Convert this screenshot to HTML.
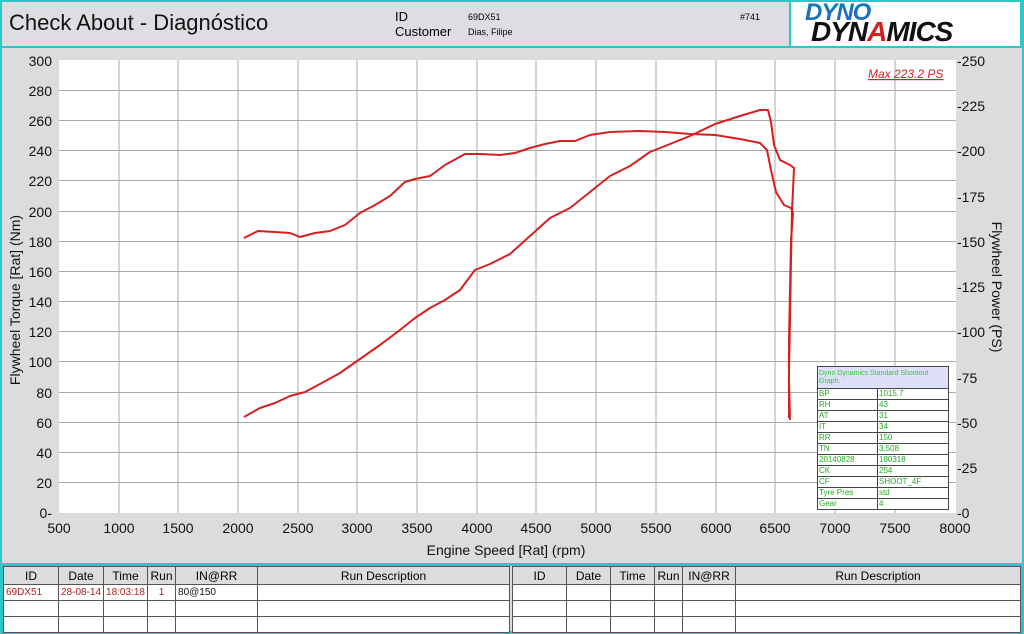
<!DOCTYPE html><html><head><meta charset="utf-8"><style>
body{margin:0;width:1024px;height:634px;overflow:hidden;background:#dcdcdf;font-family:"Liberation Sans",sans-serif;position:relative}
.a{position:absolute}
table{border-collapse:collapse;font-size:11px;position:absolute;background:#fff}
td{border:1px solid #555;height:15px;padding:0 2px;white-space:nowrap}
th{border:1px solid #555;height:15px;font-weight:normal;background:#dcdcdf;font-size:12px}
.inf{table-layout:fixed;width:131px;font-size:8px;color:#2a2;background:#fff}
.inf td{height:10px;line-height:10px;padding:0 1px;overflow:hidden;border-color:#444}
</style></head><body>
<div class="a" style="left:0;top:0;width:1024px;height:48px;border:2px solid #2cc7c7;box-sizing:border-box;background:#dedee2"></div>
<div class="a" style="left:9px;top:10px;font-size:22px;color:#111">Check About - Diagnóstico</div>
<div class="a" style="left:395px;top:9px;font-size:13px">ID</div>
<div class="a" style="left:395px;top:24px;font-size:13px">Customer</div>
<div class="a" style="left:468px;top:12px;font-size:9px">69DX51</div>
<div class="a" style="left:468px;top:27px;font-size:9px">Dias, Filipe</div>
<div class="a" style="left:740px;top:12px;font-size:9px">#741</div>
<div class="a" style="left:789px;top:0;width:233px;height:48px;background:#fff;border:2px solid #2cc7c7;box-sizing:border-box;overflow:hidden">
<div class="a" style="left:14px;top:-3px;font:italic bold 24px 'Liberation Sans',sans-serif;color:#1f6fc0;letter-spacing:-1px">DYNO</div>
<div class="a" style="left:20px;top:14px;font:italic bold 28px 'Liberation Sans',sans-serif;color:#111;letter-spacing:-1px">DYN<span style="color:#d02020">A</span>MICS</div>
</div>
<div class="a" style="left:0;top:48px;width:2px;height:516px;background:#2cc7c7"></div>
<div class="a" style="right:0;top:48px;width:2px;height:516px;background:#2cc7c7"></div>
<svg class="a" style="left:0;top:48px" width="1024" height="516" viewBox="0 48 1024 516" font-family="Liberation Sans" font-size="14">
<rect x="59" y="60" width="897" height="453" fill="#fff"/>
<g stroke="#aaa" stroke-width="1">
<path d="M119 60V513M178 60V513M238 60V513M298 60V513M357 60V513M417 60V513M477 60V513M536 60V513M596 60V513M656 60V513M716 60V513M775 60V513M835 60V513M895 60V513"/>
<path d="M59 90.5H956M59 120.5H956M59 150.5H956M59 180.5H956M59 211.5H956M59 241.5H956M59 271.5H956M59 301.5H956M59 331.5H956M59 361.5H956M59 392.5H956M59 422.5H956M59 452.5H956M59 482.5H956"/>
</g>
<g fill="#111" text-anchor="end">
<text x="52" y="66">300</text><text x="52" y="96">280</text><text x="52" y="126">260</text><text x="52" y="156">240</text><text x="52" y="186">220</text><text x="52" y="217">200</text><text x="52" y="247">180</text><text x="52" y="277">160</text><text x="52" y="307">140</text><text x="52" y="337">120</text><text x="52" y="367">100</text><text x="52" y="398">80</text><text x="52" y="428">60</text><text x="52" y="458">40</text><text x="52" y="488">20</text><text x="52" y="518">0-</text>
</g>
<g fill="#111">
<text x="957" y="66">-250</text><text x="957" y="111">-225</text><text x="957" y="156">-200</text><text x="957" y="202">-175</text><text x="957" y="247">-150</text><text x="957" y="292">-125</text><text x="957" y="337">-100</text><text x="957" y="383">-75</text><text x="957" y="428">-50</text><text x="957" y="473">-25</text><text x="957" y="518">-0</text>
</g>
<g fill="#111" text-anchor="middle">
<text x="59" y="533">500</text><text x="119" y="533">1000</text><text x="178" y="533">1500</text><text x="238" y="533">2000</text><text x="298" y="533">2500</text><text x="357" y="533">3000</text><text x="417" y="533">3500</text><text x="477" y="533">4000</text><text x="536" y="533">4500</text><text x="596" y="533">5000</text><text x="656" y="533">5500</text><text x="716" y="533">6000</text><text x="775" y="533">6500</text><text x="835" y="533">7000</text><text x="895" y="533">7500</text><text x="955" y="533">8000</text>
<text x="506" y="555">Engine Speed [Rat] (rpm)</text>
<text transform="translate(20 300) rotate(-90)">Flywheel Torque [Rat] (Nm)</text>
<text transform="translate(992 287) rotate(90)">Flywheel Power (PS)</text>
</g>
<text x="868" y="78" fill="#d02020" font-size="12" font-style="italic" text-decoration="underline">Max 223.2 PS</text>
<g fill="none" stroke="#d42020" stroke-width="2" stroke-linejoin="round">
<path d="M244 238L258 231L275 232L290 233L300 237L315 233L330 231L345 225L360 213L375 205L390 196L405 182L415 179L430 176L445 165L465 154L480 154L500 155L515 153L530 148L545 144L560 141L575 141L590 135L610 132L640 131L665 132L690 134L715 135L740 139L760 143L767 150L771 170L776 192L784 205L791 208L793 213L791 240L790 290L789 340L789 380L790 420"/>
<path d="M244 417L260 408L275 403L290 396L305 392L320 384L340 373L360 359L380 345L400 330L415 318L430 308L445 300L460 290L475 270L490 264L510 254L530 236L550 218L570 208L590 192L610 176L630 166L650 152L670 144L690 136L715 124L740 116L760 110L768 110L771 122L774 145L780 160L790 165L794 168L793 190L792 210L791 260L790 320L789 370L789 418"/>
</g>
</svg>
<table class="inf" style="left:817px;top:366px">
<col style="width:60px"><col style="width:71px">
<tr><td colspan="2" style="background:#dde0f8;height:21px;line-height:8px;color:#3c3;white-space:normal;font-size:7px">Dyno Dynamics Standard Shootout Graph.</td></tr>
<tr><td>BP</td><td>1015.7</td></tr>
<tr><td>RH</td><td>43</td></tr>
<tr><td>AT</td><td>31</td></tr>
<tr><td>IT</td><td>34</td></tr>
<tr><td>RR</td><td>150</td></tr>
<tr><td>TN</td><td>3.508</td></tr>
<tr><td>20140828</td><td>180318</td></tr>
<tr><td>CK</td><td>254</td></tr>
<tr><td>CF</td><td>SHOOT_4F</td></tr>
<tr><td>Tyre Pres</td><td>std</td></tr>
<tr><td>Gear</td><td>4</td></tr>
</table>
<div class="a" style="left:0;top:563px;width:1024px;height:71px;border:3px solid #2cc7c7;box-sizing:border-box;background:#dcdcdf"></div>
<table style="left:3px;top:566px;width:507px">
<tr><th style="width:52px">ID</th><th style="width:41px">Date</th><th style="width:41px">Time</th><th style="width:25px">Run</th><th style="width:79px">IN@RR</th><th>Run Description</th></tr>
<tr style="color:#b02020;font-size:10px"><td>69DX51</td><td>28-08-14</td><td>18:03:18</td><td style="text-align:center">1</td><td style="color:#111">80@150</td><td></td></tr>
<tr><td></td><td></td><td></td><td></td><td></td><td></td></tr>
<tr><td></td><td></td><td></td><td></td><td></td><td></td></tr>
</table>
<table style="left:512px;top:566px;width:509px">
<tr><th style="width:51px">ID</th><th style="width:41px">Date</th><th style="width:41px">Time</th><th style="width:25px">Run</th><th style="width:50px">IN@RR</th><th>Run Description</th></tr>
<tr><td></td><td></td><td></td><td></td><td></td><td></td></tr>
<tr><td></td><td></td><td></td><td></td><td></td><td></td></tr>
<tr><td></td><td></td><td></td><td></td><td></td><td></td></tr>
</table>
</body></html>
